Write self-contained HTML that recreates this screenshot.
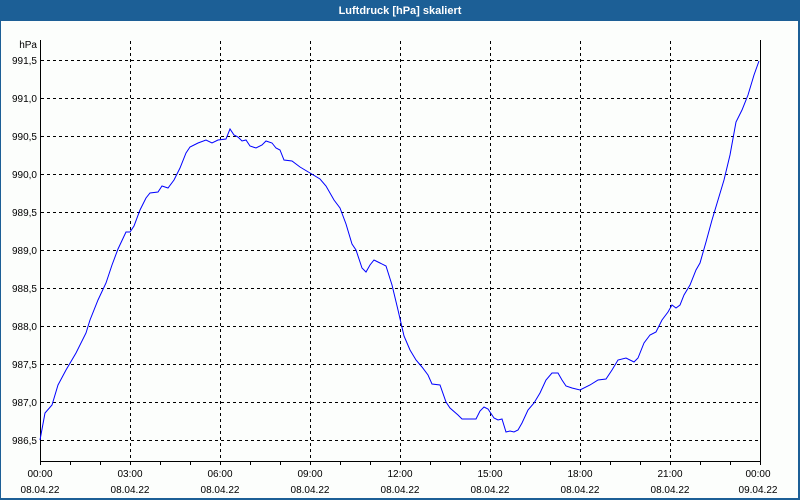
<!DOCTYPE html>
<html><head><meta charset="utf-8"><style>
html,body{margin:0;padding:0;width:800px;height:500px;overflow:hidden;background:#fff}
</style></head><body>
<svg width="800" height="500" xmlns="http://www.w3.org/2000/svg" style="display:block;font-family:'Liberation Sans','DejaVu Sans',sans-serif">
<rect x="0" y="0" width="800" height="500" fill="#1c5f96"/>
<rect x="1" y="21" width="797" height="477" fill="#fcfefc"/>
<text x="400" y="14" text-anchor="middle" font-size="11" font-weight="bold" fill="#fff">Luftdruck [hPa] skaliert</text>
<g stroke="#000" stroke-width="1" stroke-dasharray="3,3" fill="none" shape-rendering="crispEdges">
<path d="M130.5 41V461M220.5 41V461M310.5 41V461M400.5 41V461M490.5 41V461M580.5 41V461M670.5 41V461"/>
<path d="M41 60.5H760M41 98.5H760M41 136.5H760M41 174.5H760M41 212.5H760M41 250.5H760M41 288.5H760M41 326.5H760M41 364.5H760M41 402.5H760M41 440.5H760"/>
</g>
<g stroke="#000" stroke-width="1" fill="none" shape-rendering="crispEdges">
<path d="M40.5 40V461.5H760.5V40"/>
<path d="M40.5 461V465M70.5 461V465M100.5 461V465M130.5 461V465M160.5 461V465M190.5 461V465M220.5 461V465M250.5 461V465M280.5 461V465M310.5 461V465M340.5 461V465M370.5 461V465M400.5 461V465M430.5 461V465M460.5 461V465M490.5 461V465M520.5 461V465M550.5 461V465M580.5 461V465M610.5 461V465M640.5 461V465M670.5 461V465M700.5 461V465M730.5 461V465M760.5 461V465"/>
</g>
<polyline fill="none" stroke="#0000ff" stroke-width="1" points="40,440 45,413 52,405 58,385 66,370 76,353 86,333 90,320 98,300 106,283 112,265 118,249 126,232 130,232 134,226 140,210 146,198 150,193 158,192 162,186 168,188 174,180 180,168 186,153 190,147 198,143 206,140 212,143 218,140 226,139 230,129 234,135 238,137 242,141 246,140 250,146 256,148 262,145 266,141 272,143 276,148 280,150 284,160 292,161 300,167 310,173 320,179 326,186 334,200 340,208 346,224 352,244 356,250 362,268 366,272 370,265 374,260 380,263 386,266 392,285 398,310 404,336 410,350 416,360 422,367 428,375 432,384 440,385 446,402 450,408 458,415 462,419 476,419 480,411 484,407 488,409 494,418 498,420 502,419 506,432 510,431 514,432 518,430 522,423 528,410 534,403 540,393 546,380 552,373 558,373 562,380 566,386 572,388 580,390 590,385 598,380 606,379 612,370 618,360 626,358 634,362 638,358 644,343 650,335 656,332 662,320 668,312 672,305 676,308 680,305 684,295 690,285 696,270 700,263 706,242 712,220 718,200 724,180 730,155 736,122 742,110 748,95 754,75 759,61"/>
<g font-size="10" fill="#000" text-anchor="end">
<text x="37" y="48">hPa</text>
<text x="37" y="64">991,5</text>
<text x="37" y="102">991,0</text>
<text x="37" y="140">990,5</text>
<text x="37" y="178">990,0</text>
<text x="37" y="216">989,5</text>
<text x="37" y="254">989,0</text>
<text x="37" y="292">988,5</text>
<text x="37" y="330">988,0</text>
<text x="37" y="368">987,5</text>
<text x="37" y="406">987,0</text>
<text x="37" y="444">986,5</text>
</g>
<g font-size="10" fill="#000" text-anchor="middle">
<text x="40" y="477">00:00</text><text x="40" y="493">08.04.22</text>
<text x="130" y="477">03:00</text><text x="130" y="493">08.04.22</text>
<text x="220" y="477">06:00</text><text x="220" y="493">08.04.22</text>
<text x="310" y="477">09:00</text><text x="310" y="493">08.04.22</text>
<text x="400" y="477">12:00</text><text x="400" y="493">08.04.22</text>
<text x="490" y="477">15:00</text><text x="490" y="493">08.04.22</text>
<text x="580" y="477">18:00</text><text x="580" y="493">08.04.22</text>
<text x="670" y="477">21:00</text><text x="670" y="493">08.04.22</text>
<text x="758" y="477">00:00</text><text x="758" y="493">09.04.22</text>
</g>
</svg>
</body></html>
